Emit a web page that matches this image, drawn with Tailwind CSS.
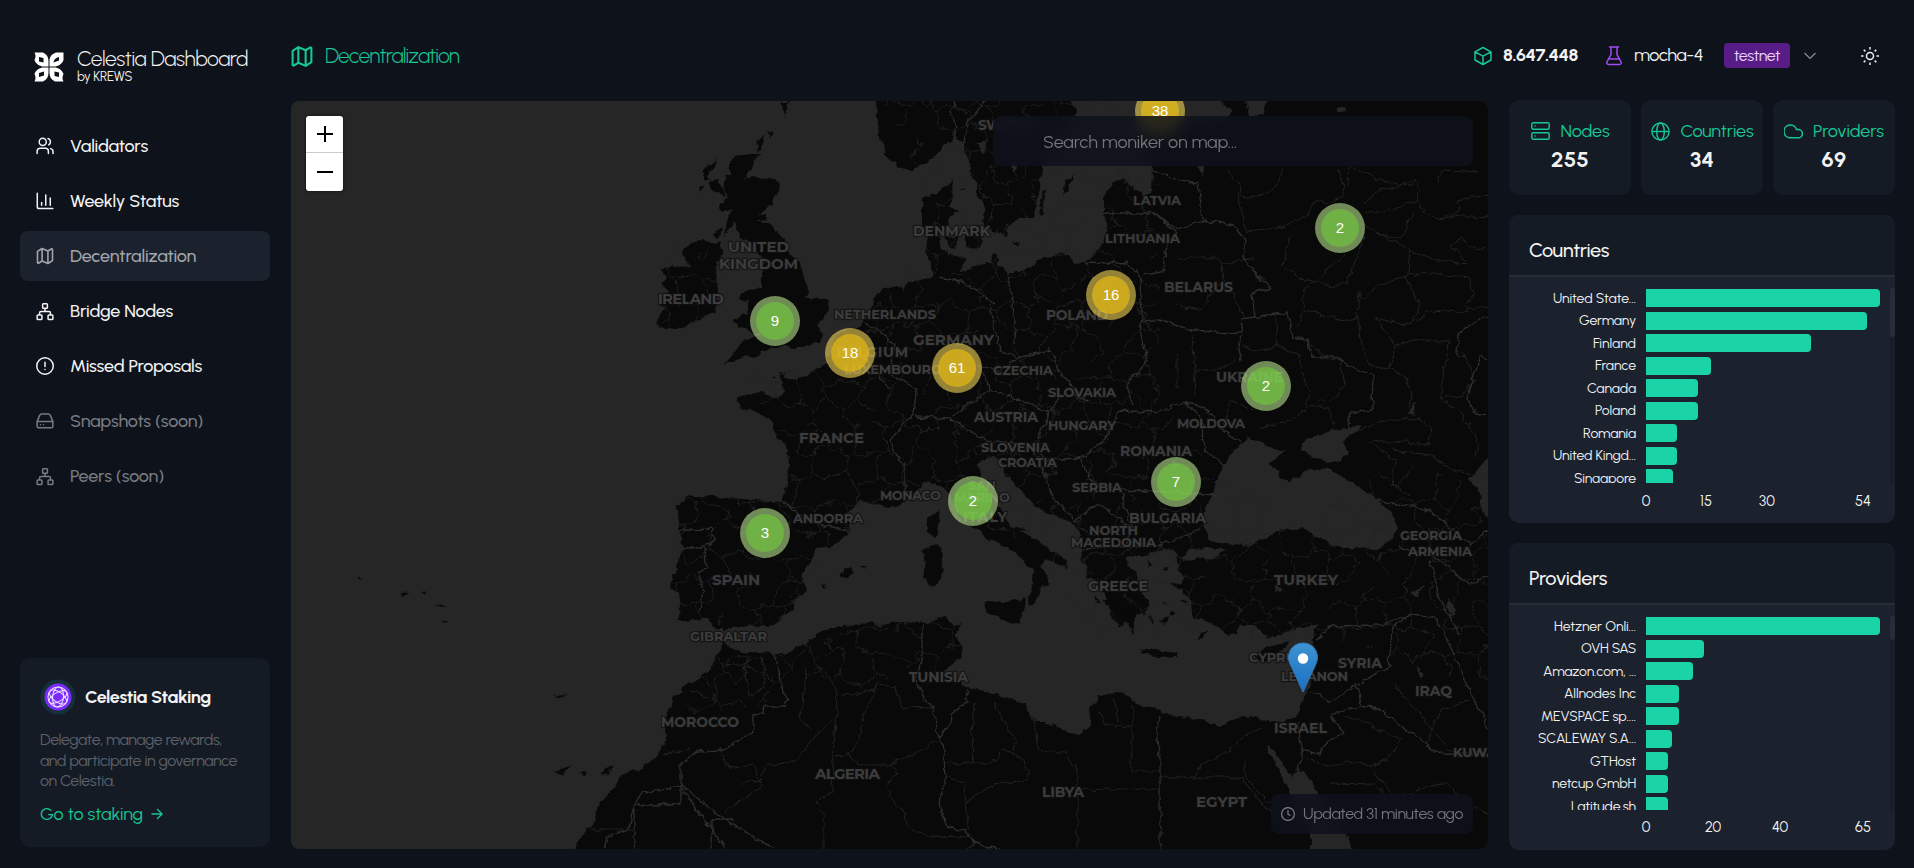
<!DOCTYPE html>
<html lang="en">
<head>
<meta charset="utf-8">
<title>Celestia Dashboard</title>
<script src="https://cdn.jsdelivr.net/npm/@tailwindcss/browser@4"></script>
</head>
<body class="h-[868px] w-[1914px] overflow-hidden bg-[#0e121b] font-[Urbanist,Lato,sans-serif] text-[#f2f2f2]">
<svg class="hidden">
  <defs>
    <symbol id="i-map" viewBox="0 0 24 24"><path d="M3 6.5 8.5 3 15.5 6 20 3.3a.8.8 0 0 1 1 .7V17.5L15.5 21 8.5 18 4 20.700a.8.8 0 0 1-1-.7ZM8.500 3v15M15.500 6v15"/></symbol>
    <symbol id="i-net" viewBox="0 0 24 24"><rect x="8.800" y="1.500" width="6.400" height="6" rx="1"/><rect x="1.500" y="16.500" width="6.400" height="6" rx="1"/><rect x="16.100" y="16.500" width="6.400" height="6" rx="1"/><path d="M12 7.500V12M4.700 16.500V14a2 2 0 0 1 2-2H17.300a2 2 0 0 1 2 2v2.500"/></symbol>
  </defs>
</svg>
<div class="flex h-full">
  <aside class="flex h-full w-[291px] shrink-0 flex-col pl-5 pr-[21px] pb-[21px]">
    <div class="flex h-[121px] items-start pl-[14px] pt-[47px]">
      <svg class="mt-[5px] h-[30px] w-[30px] shrink-0" viewBox="0 0 30 30" fill="#fff" fill-rule="evenodd">
        <path d="M.5.5H9C12.500 2 14.500 5 14.500 9V14.500H10C5.500 14.500 2 12 .5 8Q2.500 4 .5.5ZM5 5V9.500L9.500 10.500V6Z"/>
        <path d="M29.500.5H22C17.500 2 15.500 5 15.500 9V14.500H20C24.500 14.500 28 12 29.500 8ZM25 5V8.500L19.500 10.500Q20 6 25 5Z"/>
        <path d="M.5 29.500H9C12.500 28 14.500 25 14.500 21V15.500H10C5.500 15.500 2 18 .5 22Q2.500 26 .5 29.500ZM5 25V21L10 19.500V23.500Z"/>
        <path d="M29.500 29.500H21C17.500 28 15.500 25 15.500 21V15.500H20C24.500 15.500 28 18 29.500 22Q27.500 26 29.500 29.500ZM25 25V20.500L20.500 19.500V24Z"/>
      </svg>
      <div class="ml-[13px] flex flex-col">
        <span data-w="171" class="h-[23px] self-start whitespace-nowrap text-[21px] font-light leading-[23px]">Celestia Dashboard</span>
        <span data-w="55" class="self-start whitespace-nowrap text-[13px] leading-[14px]">by KREWS</span>
      </div>
    </div>
    <nav class="flex flex-col gap-[5px] text-[18px] font-medium">
      <a class="flex h-[50px] items-center gap-4 rounded-lg pl-4"><svg class="h-[18px] w-[18px]" viewBox="0 0 24 24" fill="none" stroke="currentColor" stroke-width="2" stroke-linecap="round"><circle cx="9" cy="6.500" r="4.700"/><path d="M1.500 22v-3a4 4 0 0 1 4-4h7a4 4 0 0 1 4 4v3M16 2a4.700 4.700 0 0 1 1 8.500M19.500 15.500a4 4 0 0 1 3.200 3.800V22"/></svg><span data-w="78">Validators</span></a>
      <a class="flex h-[50px] items-center gap-4 rounded-lg pl-4"><svg class="h-[18px] w-[18px]" viewBox="0 0 24 24" fill="none" stroke="currentColor" stroke-width="2" stroke-linecap="round"><path d="M1.700 1.500V19.500a2.500 2.500 0 0 0 2.500 2.500H22.500M7.500 14v3.500M13 4v13.500M19 8v9.500"/></svg><span data-w="109">Weekly Status</span></a>
      <a class="flex h-[50px] items-center gap-4 rounded-lg bg-[#1b222e] pl-4 text-[#a2a5ab]"><svg class="h-[20px] w-[18px]" fill="none" stroke="currentColor" stroke-width="1.900" stroke-linejoin="round"><use href="#i-map" width="20" height="20" x="-1"/></svg><span data-w="126">Decentralization</span></a>
      <a class="flex h-[50px] items-center gap-4 rounded-lg pl-4"><svg class="h-[19px] w-[18px]" fill="none" stroke="currentColor" stroke-width="2"><use href="#i-net"/></svg><span data-w="103">Bridge Nodes</span></a>
      <a class="flex h-[50px] items-center gap-4 rounded-lg pl-4"><svg class="h-[18px] w-[18px]" viewBox="0 0 24 24" fill="none" stroke="currentColor" stroke-width="2" stroke-linecap="round"><circle cx="12" cy="12" r="11"/><path d="M12 7v5.500M12 16.500v.2"/></svg><span data-w="132">Missed Proposals</span></a>
      <a class="flex h-[50px] items-center gap-4 rounded-lg pl-4 text-[#777b82]"><svg class="h-[18px] w-[18px]" viewBox="0 0 24 24" fill="none" stroke="currentColor" stroke-width="2" stroke-linecap="round" stroke-linejoin="round"><path d="M1.500 12.500 5 4.500Q5.500 2.500 7.500 2.500H16.500Q18.500 2.500 19 4.500L22.500 12.500V19a2 2 0 0 1-2 2H3.500a2 2 0 0 1-2-2ZM1.500 12.500H22.500M6 17h.1M10 17h.1"/></svg><span data-w="133">Snapshots (soon)</span></a>
      <a class="flex h-[50px] items-center gap-4 rounded-lg pl-4 text-[#777b82]"><svg class="h-[19px] w-[18px]" fill="none" stroke="currentColor" stroke-width="2"><use href="#i-net"/></svg><span data-w="94">Peers (soon)</span></a>
    </nav>
    <section class="mt-auto flex h-[189px] flex-col rounded-[10px] bg-[#151b25] px-5 pt-[21px]">
      <div class="flex h-9 items-center">
        <svg class="h-[36px] w-[36px] shrink-0" viewBox="0 0 36 36"><circle cx="18" cy="18" r="17.500" fill="#15303a"/><circle cx="18" cy="18" r="13.500" fill="#7b2bf9"/><g fill="none" stroke="#eadcff" stroke-width="1.100"><circle cx="18" cy="18" r="10"/><ellipse cx="18" cy="18" rx="10" ry="5" transform="rotate(35 18 18)"/><ellipse cx="18" cy="18" rx="10" ry="4.500" transform="rotate(-30 18 18)"/><ellipse cx="18" cy="18" rx="10" ry="5.500" transform="rotate(95 18 18)"/></g></svg>
        <span data-w="126" class="ml-[9px] text-[18px] font-bold">Celestia Staking</span>
      </div>
      <p class="mt-[15px] text-[16px] leading-[20.500px] text-[#5c6169]"><span data-w="182">Delegate, manage rewards,</span><br><span data-w="197">and participate in governance</span><br><span data-w="75">on Celestia.</span></p>
      <div class="mt-[9px] flex items-center gap-2 text-[18px] text-[#17c795]"><span data-w="103">Go to staking</span><svg class="h-3 w-3" viewBox="0 0 12 12" fill="none" stroke="currentColor" stroke-width="1.400" stroke-linecap="round"><path d="M1 6H11M6.500 1.500 11 6 6.500 10.500"/></svg></div>
    </section>
  </aside>

  <div class="flex min-w-0 grow flex-col">
    <header class="flex h-[100px] shrink-0 items-center pt-[11px]">
      <svg class="h-[24px] w-[23px] text-[#17c795]" fill="none" stroke="currentColor" stroke-width="2" stroke-linejoin="round"><use href="#i-map" width="25" height="25" x="-1.500"/></svg>
      <span data-w="134" class="ml-[11px] text-[21px] font-light text-[#17c795]">Decentralization</span>
      <div class="ml-auto flex items-center">
        <svg class="h-5 w-[18px] text-[#17c795]" viewBox="0 0 18 20" fill="none" stroke="currentColor" stroke-width="1.500" stroke-linejoin="round"><path d="M9 1.500 17 5.800V14L9 18.500 1 14V5.800ZM1 5.800 9 10.200 17 5.800M9 10.200V18.500"/></svg>
        <span data-w="75" class="ml-[11px] text-[18px] font-bold">8.647.448</span>
        <svg class="ml-[28px] h-5 w-4 text-[#a34bf2]" viewBox="0 0 16 20" fill="none" stroke="currentColor" stroke-width="1.500" stroke-linecap="round"><path d="M3.500 1H12.500M5 1V8.500L.9 16Q.5 18.500 3 18.500H13Q15.500 18.500 15.100 16L11 8.500V1M3 13H13"/></svg>
        <span data-w="69" class="ml-3 text-[18px]">mocha-4</span>
        <span class="ml-[21px] flex h-[25px] w-[66px] items-center justify-center rounded bg-[#581c87] text-[16px] text-[#e9d5ff]"><span data-w="46">testnet</span></span>
        <svg class="ml-[14px] h-[8px] w-[12px]" viewBox="0 0 12 8" fill="none" stroke="#8b8f96" stroke-width="1.200"><path d="M.5 1 6 6.500 11.500 1"/></svg>
        <svg class="ml-[45px] mr-[35px] h-[18px] w-[18px]" viewBox="0 0 18 18" fill="none" stroke="#eee" stroke-width="1.500"><circle cx="9" cy="9" r="3.500"/><path d="M9 0V2.500M9 15.500V18M0 9H2.500M15.500 9H18M2.700 2.700 4.400 4.400M13.600 13.600 15.300 15.300M2.700 15.300 4.400 13.600M13.600 4.400 15.300 2.700"/></svg>
      </div>
    </header>
    <div class="flex grow">
      <main class="relative mt-px h-[748px] w-[1197px] shrink-0 overflow-hidden rounded-lg bg-[#262626]">
        <svg class="block h-[748px] w-[1197px]" viewBox="291 101 1197 748">
          <defs>
            <filter id="rough" color-interpolation-filters="sRGB" filterUnits="userSpaceOnUse" x="280" y="90" width="1220" height="770"><feTurbulence type="fractalNoise" baseFrequency=".11" numOctaves="3" seed="4"/><feDisplacementMap in="SourceGraphic" scale="7" xChannelSelector="R" yChannelSelector="G"/></filter>
            <filter id="wiggle" color-interpolation-filters="sRGB" filterUnits="userSpaceOnUse" x="280" y="90" width="1220" height="770"><feTurbulence type="fractalNoise" baseFrequency=".07" numOctaves="3" seed="9"/><feDisplacementMap in="SourceGraphic" scale="15" xChannelSelector="R" yChannelSelector="G"/></filter>
            <clipPath id="web-area"><path d="M657 241H722V330H657ZM737 369 813 369 873 300 905 280 922 180 880 101H1160V400L1215 470 1300 520 1400 460 1488 490V690L1340 640 1200 640 1100 640 1020 540 973 528 945 487 885 502 851 530 807 590 775 625H672V496H782L787 445Z"/><path d="M730 655 780 655 870 622 962 616V680L905 668 870 690 790 670 765 705 700 715 670 715 712 650Z"/></clipPath>
          </defs>
          <g filter="url(#rough)" fill="#090909">
            <path d="M734 156 761 153 750 168 744 178 773 179 779 183 775 197 767 209 757 215 766 214 765 220 755 222 768 222 777 230 783 239 785 250 800 263 805 280 809 292 805 298 813 297 827 299 829 308 823 320 817 325 824 335 820 342 805 347 787 347 773 347 760 352 755 358 747 355 733 363 724 363 737 350 745 339 763 336 755 333 740 327 731 323 740 317 747 312 747 302 740 298 743 292 755 289 762 288 762 273 765 262 757 253 753 243 745 240 737 230 735 220 728 233 724 238 727 220 732 208 722 213 720 207 727 197 723 190 725 177 732 173 730 165Z"/>
            <path d="M690 244 703 241 720 243 723 253 717 262 716 272 718 290 716 313 703 317 690 323 677 330 658 328 657 320 665 308 660 300 670 293 661 285 667 277 660 270 673 266 690 265 682 255Z"/>
            <path d="M877 95 877 101 878 123 879 138 883 143 885 153 893 163 903 169 913 169 927 163 937 155 942 145 952 142 955 127 957 137 964 145 966 157 973 177 977 193 987 208 983 218 985 228 997 233 1007 237 1030 267 1008 275 1002 267 987 262 973 268 961 272 965 260 942 250 940 237 947 227 950 218 958 210 950 208 953 180 942 187 937 195 923 198 922 207 922 223 928 237 925 250 930 263 933 277 920 280 907 282 905 290 897 286 883 288 873 300 870 313 860 327 837 335 830 347 828 363 813 369 807 377 797 379 785 378 786 373 779 372 782 383 783 395 772 397 762 392 750 394 737 398 740 408 755 412 768 418 773 427 777 437 787 445 789 460 787 487 782 502 757 500 727 498 697 496 688 497 675 508 680 527 682 547 678 567 672 578 671 588 678 593 680 610 677 621 688 621 707 618 715 627 722 631 722 643 715 660 707 673 688 685 673 698 668 713 664 730 667 735 663 747 655 757 638 770 622 774 613 790 599 803 593 825 580 838 570 860 1500 860 1500 90Z"/>
            <g fill="#262626">
              <path d="M985 228 997 233 1007 237 1008 227 1018 218 1033 218 1037 204 1040 190 1042 167 1050 150 1062 135 1068 120 1076 113 1068 95 1215 95 1232 112 1224 122 1190 124 1150 125 1148 150 1153 166 1152 193 1143 197 1133 187 1123 178 1111 183 1105 197 1105 213 1107 233 1099 250 1086 262 1074 263 1068 253 1046 256 1030 267 1008 275 1002 267 987 262 973 268 961 272 965 260 975 245Z"/>
              <path d="M722 631 732 627 760 626 775 625 782 617 793 610 795 600 807 589 801 577 813 557 817 550 840 542 851 530 848 515 860 500 872 502 888 507 900 505 913 493 927 482 943 487 952 497 960 517 973 528 990 540 1007 547 1023 560 1032 572 1033 583 1028 598 1030 604 1035 602 1040 590 1049 585 1047 575 1042 568 1045 558 1067 568 1065 560 1040 543 1020 530 1033 532 1010 525 997 503 982 483 979 463 993 455 1003 463 1005 473 1020 490 1040 510 1058 517 1073 522 1080 537 1082 560 1090 577 1107 597 1112 617 1120 627 1127 623 1133 635 1135 617 1147 613 1148 600 1137 583 1138 573 1127 565 1128 557 1147 555 1163 548 1177 553 1177 563 1180 573 1185 578 1180 587 1190 600 1193 617 1207 622 1220 628 1227 635 1238 633 1241 625 1253 625 1268 637 1287 633 1297 627 1310 627 1318 623 1313 640 1317 650 1313 677 1303 700 1297 717 1280 722 1260 719 1250 715 1233 720 1220 727 1200 720 1180 716 1163 715 1160 708 1135 705 1132 697 1117 692 1100 696 1089 708 1091 725 1077 736 1053 725 1033 718 1023 703 993 693 967 687 943 673 960 657 962 647 955 637 962 622 953 625 947 616 927 623 897 622 880 627 870 623 843 626 820 632 807 642 787 652 773 655 760 652 740 653 730 647 722 641Z"/>
              <path d="M1227 460 1228 457 1246 438 1258 440 1269 447 1287 450 1268 462 1282 478 1290 482 1310 468 1330 470 1353 483 1377 500 1392 512 1398 528 1393 540 1380 548 1353 549 1333 545 1317 537 1303 528 1280 530 1260 540 1250 546 1227 543 1210 540 1203 528 1203 510 1213 495 1217 477Z"/>
              <path d="M1301 448 1309 438 1335 430 1362 425 1352 435 1343 443 1349 450 1341 460 1327 463 1313 458ZM1182 560 1190 550 1207 547 1227 552 1210 558ZM1495 450 1478 470 1469 480 1480 493 1482 510 1495 525ZM1244 95 1248 116 1262 115 1271 95ZM1338 108 1345 106 1346 112 1337 113ZM1410 592 1425 586 1418 597ZM1448 598 1456 610 1453 618 1447 608ZM977 143 988 138 985 155ZM1012 165 1018 158 1015 178ZM1416 665 1423 675 1421 679ZM1276 583 1283 590 1277 593ZM1407 416 1417 401 1414 416ZM1196 166 1204 166 1203 174Z"/>
              <path d="M1265 745 1273 750 1293 777 1297 772 1302 747 1304 748 1299 772 1305 772 1313 783 1322 803 1340 823 1355 855H1310L1310 833 1297 810 1287 787 1280 772Z"/>
            </g>
            <path d="M983 603 990 601 1003 603 1026 598 1022 613 1020 626 1007 621 987 612ZM923 550 937 544 943 557 942 580 930 586 924 577 926 563ZM927 518 938 510 940 523 936 539 928 532ZM1140 648 1153 650 1178 653 1177 657 1157 657 1141 652ZM839 574 850 568 854 572 847 579ZM822 586 827 584 825 588ZM859 567 865 567 866 570ZM1066 182 1074 174 1068 192 1063 194ZM1039 215 1044 190 1046 190 1042 216ZM944 236 957 238 956 250 949 248ZM966 230 980 226 981 248 966 247ZM959 189 964 187 963 190ZM1012 241 1020 243 1018 247ZM992 256 998 254 998 267 991 267ZM782 101 790 101 786 118ZM703 170 717 157 713 170 707 175 710 180 703 178ZM709 182 718 179 725 197 716 194ZM699 185 703 185 700 195ZM757 142 765 134 760 148 756 151ZM713 233 722 227 718 240ZM767 132 774 134 770 137ZM1198 638 1206 630 1204 640ZM1254 656 1267 647 1290 642 1277 655 1264 662ZM1102 602 1130 596 1148 609 1132 613 1125 618 1112 608ZM600 774 612 764 610 772 604 776ZM554 771 570 766 572 766 562 775ZM580 772 587 773 583 778ZM553 695 566 694 560 697ZM400 592 408 593 404 596ZM420 592 428 593 424 595ZM436 604 446 605 441 608ZM355 577 362 578 358 580ZM441 622 448 621 445 624ZM1146 558 1153 566 1148 565ZM1163 568 1170 567 1167 571ZM1172 583 1184 585 1178 590ZM1180 600 1187 603 1181 605ZM1150 615 1155 621 1152 623ZM1160 620 1168 617 1165 626ZM1170 610 1177 613 1170 616ZM1163 602 1168 604 1165 607ZM1086 570 1091 578 1087 579ZM1094 594 1101 603 1096 603ZM772 376 774 378 772 378ZM776 381 777 383 775 383Z"/>
          </g>
          <g clip-path="url(#web-area)"><path id="web" fill="none" stroke="#252525" stroke-width=".8" filter="url(#wiggle)"/></g>
          <g filter="url(#rough)" fill="none" stroke="#262626" stroke-width=".9" stroke-linejoin="round">
            <path d="M740 784 760 780 765 767 797 760 810 742 838 713M720 749 729 769 752 764 762 786 725 812M806 667 804 703 799 717 810 729M824 671 836 685 837 712 833 756 832 793 816 802 823 814V849M837 696 875 690 863 717 858 743 848 755 833 756M875 690 877 684 895 686 903 707 933 708M848 755 859 765 890 765 938 741M890 765 898 774 887 784 893 802 903 810 907 827 927 836 970 837M946 763 992 763 1003 749 1020 758 1030 771 1027 780 993 785 966 802M970 837 966 802 963 782 947 777M974 703 972 736 973 763M994 703 1010 733 1016 742 1013 757M1033 718 1039 750 1066 752 1071 764 1077 769 1077 849M1077 790 1159 788M1132 705V771H1159M1160 778H1241L1267 810 1275 812M1194 778 1200 765 1225 754 1240 739 1260 727M1245 760 1245 778 1270 803M1115 698 1118 722M1100 710 1103 724 1130 727M1345 716 1370 725 1400 739 1387 760 1375 765 1345 762 1330 768 1307 758M1370 765 1403 810M1428 740 1440 710 1470 700M1393 683 1450 750 1488 754M1330 783 1375 784 1390 800 1442 782 1488 815M592 829 633 829M690 747 681 751 663 755M722 665 744 664 762 656M744 664 750 695M710 697 690 690M750 697 765 687 762 656"/>
            <path d="M1227 168 1242 190 1240 198 1265 195 1280 182 1283 166M1240 198 1243 220 1247 232 1275 229 1290 224 1307 215 1317 200 1327 204 1340 198 1345 186 1337 168M1350 168 1347 186M1351 166 1375 178 1400 186 1415 180 1420 190 1417 200 1420 208 1437 219 1462 216 1488 218M1365 204 1380 190 1413 184M1417 200 1385 213 1365 211M1437 219 1460 212 1457 200 1488 195M1437 184 1443 170 1480 172M1413 212 1400 240 1375 232 1363 224M1365 235 1356 258 1348 282 1332 286 1317 282 1328 268 1345 255M1375 232 1410 250 1408 275 1380 285 1360 300M1410 252 1450 262 1468 264 1450 245 1462 238 1475 250 1488 245M1408 275 1430 273 1448 275 1470 278 1473 295 1465 308M1405 277 1420 305 1410 325 1375 318M1410 325 1430 310 1460 312 1488 305M1317 282 1305 288 1303 310 1320 315 1345 320 1358 318 1360 290M1283 265 1300 278 1317 282M1283 265 1290 235M1222 265 1253 257M1178 258 1222 258 1222 280 1200 310 1175 305M1222 265 1222 275 1245 318M1358 318 1362 345 1370 365 1390 368 1395 345 1375 318M1395 345 1420 340 1450 340 1445 365 1440 398 1463 395 1475 380 1462 350M1390 368 1407 378 1412 395 1410 412M1303 312 1297 328M1340 360 1322 355 1298 335M1275 312 1278 345 1260 352 1243 345M1278 345 1300 355 1302 378M1320 358 1340 360 1345 385 1330 402 1318 400M1192 335 1195 370 1220 370 1235 360M1178 355V390M1195 370 1194 394M1302 378 1310 390 1305 410 1288 422 1262 428M1310 405 1328 408 1335 425M1357 430 1378 422 1420 418 1432 428 1430 445 1370 440M1372 443 1395 460 1392 485 1410 495M1392 450 1430 455 1453 470 1488 478M1440 398 1458 410 1478 440 1475 455M1225 425 1230 400 1255 410"/>
          </g>
          <g filter="url(#rough)" fill="none" stroke="#2f2f2f" stroke-width="1.300" stroke-linejoin="round">
            <path d="M774 655 780 675 783 692 789 701 785 706H764L763 713 752 715 755 730 735 743 724 751 697 752 681 763V787L725 849M681 785 725 820 775 849M681 787V805H634V849M681 787 643 792 634 805 628 828 607 837 604 849M711 849 711 820 735 820"/>
            <path d="M922 624 922 660 915 680 925 700 933 707 939 738 944 750 945 785 938 802 948 827 966 832 975 844 1000 849M939 738 950 725 951 715 968 702 967 689M975 844 967 849M1160 715 1157 740 1160 756V849M1297 720 1302 750M1302 750 1317 754 1328 742 1345 733 1330 716 1360 706 1380 709 1400 725 1440 754 1488 755M1310 692 1330 702 1389 665 1392 630 1408 615 1380 625 1330 626 1317 640M1408 615 1435 617 1450 645 1460 670 1488 728M1356 683 1362 706"/>
            <path d="M680 530 690 530 711 529 715 538 705 547 682 547M705 547 706 570 698 573 704 590 699 613M782 502 800 515 820 525 850 530M830 340 850 358 865 360 890 388M865 325 880 330 895 345 890 375 917 388 913 415 890 440 905 470 905 490 913 495M990 305 1000 350 1018 358 1050 350 1060 372 1085 400M1008 275 1015 320 1014 345M938 277 965 282 995 305M1018 358 1000 372 980 365 990 390 1008 396 1050 412 1060 395 1090 400M990 390 950 418 915 417M950 418 985 440 1030 445M1048 412 1045 425 1033 445 1046 460 1080 458 1105 440 1120 410 1155 412 1185 403 1203 420 1204 450 1227 466M1080 458 1090 480 1120 490 1170 492 1216 495M1030 445 1045 475 1050 495 1075 520M1120 490 1132 530 1125 547 1160 545 1200 530M1075 520 1095 505 1110 510 1132 530M1082 550 1100 545 1125 547M1126 262 1130 265 1139 275 1144 320 1140 325 1147 360 1127 385 1132 405M1086 262 1126 264M1105 213 1155 213 1177 233 1165 250 1163 272 1142 275M1153 171 1180 180 1198 183 1203 220 1233 225 1245 240 1243 257 1257 275 1270 288 1252 293 1255 317 1242 319 1240 332 1213 333 1193 330 1160 321 1144 323M1255 317 1287 312 1293 337 1307 340 1312 357 1337 357 1350 367 1373 375 1372 410 1350 413 1348 428M1240 332 1238 350 1241 362M1155 213 1178 230 1203 220M1185 403 1205 408 1222 430 1240 442M1377 500 1430 510 1470 545 1488 530M1398 545 1440 560 1470 585 1488 575M1430 560 1440 600 1460 635M1488 315 1458 333 1457 355 1464 358M1488 360 1480 356 1467 400 1475 412 1488 414M963 145 970 120 985 101M957 127 950 112 955 101"/>
          </g>
          <g id="labels" font-family="Montserrat,'Open Sans',sans-serif" font-weight="700" fill="#3c3c3c" stroke="#101010" stroke-width="2.500" stroke-opacity=".75" paint-order="stroke" stroke-linejoin="round"></g>
        </svg>
        <div id="clusters" class="contents font-['Liberation_Sans',sans-serif] text-[15px]"></div>
        <svg class="absolute left-[996px] top-[541px] h-[51px] w-[32px]" viewBox="0 0 32 51"><defs><linearGradient id="pin" x2="0" y2="1"><stop stop-color="#3e93d0"/><stop offset="1" stop-color="#1b6fc4"/></linearGradient></defs><path d="M16 1C7 1 1.500 8 1.500 15.500 1.500 19 3 22 4.500 25L16 50 27.500 25C29 22 30.500 19 30.500 15.500 30.500 8 25 1 16 1Z" fill="url(#pin)" stroke="#2e78b4" stroke-width="1"/><circle cx="16" cy="16.500" r="5.200" fill="#fff"/></svg>
        <div class="absolute left-[15px] top-[15px] flex w-[37px] flex-col rounded-[3px] bg-white shadow-[0_0_3px_rgba(0,0,0,.65)]">
          <div class="flex h-[37px] items-center justify-center border-b border-[#ccc]"><svg class="h-4 w-4" viewBox="0 0 16 16" stroke="#000" stroke-width="2"><path d="M0 8H16M8 0V16"/></svg></div>
          <div class="flex h-[38px] items-center justify-center"><svg class="h-4 w-4" viewBox="0 0 16 16" stroke="#000" stroke-width="2"><path d="M0 8H16"/></svg></div>
        </div>
        <div class="absolute left-[702px] top-[15px] flex h-[50px] w-[480px] items-center rounded-lg bg-[#0e121b]/85 pl-[50px] pt-[2px] text-[18px] text-[#72757b] backdrop-blur-[8px]"><span data-w="194">Search moniker on map...</span></div>
        <div class="absolute left-[980px] top-[693px] flex h-[40px] w-[202px] items-center rounded-lg bg-[#0e121b]/85 pl-[10px] text-[16px] text-[#72757b] backdrop-blur-[8px]"><svg class="mr-2 h-[14px] w-[14px] shrink-0" viewBox="0 0 14 14" fill="none" stroke="#85888e" stroke-width="1.100"><circle cx="7" cy="7" r="6.400"/><path d="M7 3V7.500L9.500 8.500"/></svg><span data-w="160">Updated 31 minutes ago</span></div>
      </main>
      <aside class="ml-[21px] flex w-[386px] flex-col">
        <div class="grid grid-cols-3 gap-[10px]">
          <div class="flex h-[95px] flex-col items-center rounded-[10px] bg-[#151b25] pt-[19px]"><div class="flex h-6 items-center gap-[11px] text-[18px] text-[#17c795]"><svg class="h-[18px] w-[19px] shrink-0" viewBox="0 0 19 18" fill="none" stroke="currentColor" stroke-width="1.400" stroke-linecap="round"><rect x=".8" y=".7" width="17.400" height="6.600" rx="1.500"/><rect x=".8" y="10.700" width="17.400" height="6.600" rx="1.500"/><path d="M4 4h.1M4 14h.1"/></svg><span data-w="49">Nodes</span></div><b data-w="38" class="mt-[4px] text-[22px] leading-[26px]">255</b></div>
          <div class="flex h-[95px] flex-col items-center rounded-[10px] bg-[#151b25] pt-[19px]"><div class="flex h-6 items-center gap-[11px] text-[18px] text-[#17c795]"><svg class="h-[19px] w-[19px] shrink-0" viewBox="0 0 20 20" fill="none" stroke="currentColor" stroke-width="1.500"><circle cx="10" cy="10" r="9"/><ellipse cx="10" cy="10" rx="4" ry="9"/><path d="M1 10H19"/></svg><span data-w="73">Countries</span></div><b data-w="24" class="mt-[4px] text-[22px] leading-[26px]">34</b></div>
          <div class="flex h-[95px] flex-col items-center rounded-[10px] bg-[#151b25] pt-[19px]"><div class="flex h-6 items-center gap-[10px] text-[18px] text-[#17c795]"><svg class="h-[15px] w-[19px] shrink-0" viewBox="0 0 19 15" fill="none" stroke="currentColor" stroke-width="1.500"><path d="M6 13.800A6.400 6.400 0 1 1 12.500 5.600H14.300A4.100 4.100 0 0 1 14.300 13.800Z"/></svg><span data-w="71">Providers</span></div><b data-w="25" class="mt-[4px] text-[22px] leading-[26px]">69</b></div>
        </div>
        <section class="mt-5 flex h-[308px] flex-col overflow-hidden rounded-[10px] bg-[#1b212d]">
          <h2 class="flex h-[62px] shrink-0 items-center border-b-2 border-[#252c38] bg-[#151b25] pl-5 pt-[9px] text-[20px] font-medium"><span data-w="80">Countries</span></h2>
          <div class="mt-[10px] flex h-[196px] justify-between overflow-hidden"><div id="countries" class="flex flex-col pt-[2px] text-[14px]"></div><div class="w-[5px] bg-[#181e29]"><div class="h-[50px] rounded-full bg-[#262d39]"></div></div></div>
          <div class="ml-[137px] flex h-[37px] items-center text-[14.500px]"><span class="-ml-[20px] w-10 text-center">0</span><span class="ml-[20px] w-10 text-center">15</span><span class="ml-[21px] w-10 text-center">30</span><span class="ml-[56px] w-10 text-center">54</span></div>
        </section>
        <section class="mt-5 flex h-[307px] flex-col overflow-hidden rounded-[10px] bg-[#1b212d]">
          <h2 class="flex h-[62px] shrink-0 items-center border-b-2 border-[#252c38] bg-[#151b25] pl-5 pt-[9px] text-[20px] font-medium"><span data-w="78">Providers</span></h2>
          <div class="mt-[10px] flex h-[195px] justify-between overflow-hidden"><div id="providers" class="flex flex-col pt-[2px] text-[14px]"></div><div class="w-[5px] bg-[#181e29]"><div class="h-[25px] rounded-full bg-[#262d39]"></div></div></div>
          <div class="ml-[137px] flex h-[36px] items-center text-[14.500px]"><span class="-ml-[20px] w-10 text-center">0</span><span class="ml-[27px] w-10 text-center">20</span><span class="ml-[27px] w-10 text-center">40</span><span class="ml-[43px] w-10 text-center">65</span></div>
        </section>
      </aside>
    </div>
  </div>
</div>
<script>
// Bar charts: label, label width, bar width
const charts = {
  countries: [['United State...',83,234],['Germany',57,221],['Finland',43,165],['France',41,65],['Canada',49,52],['Poland',41,52],['Romania',53,31],['United Kingd...',83,31],['Singapore',62,27]],
  providers: [['Hetzner Onli...',82,234],['OVH SAS',55,58],['Amazon.com, ...',93,47],['Allnodes Inc',72,33],['MEVSPACE sp....',95,33],['SCALEWAY S.A...',98,26],['GTHost',46,22],['netcup GmbH',84,22],['Latitude.sh',65,22]]
};
for (const id in charts) document.getElementById(id).innerHTML = charts[id].map(([t, w, b]) =>
  `<div class="flex h-[22.500px] shrink-0 items-start"><div class="flex h-[18px] w-[137px] items-center justify-end pr-[10px] whitespace-nowrap"><span data-w="${w}">${t}</span></div><div class="h-[18px] rounded-r bg-[#1ad3a7]" style="width:${b}px"></div></div>`).join('');

// Marker clusters: x, y, count
document.getElementById('clusters').innerHTML = [[484,220,9],[559,252,18],[666,267,61],[869,10,38],[820,194,16],[1049,127,2],[975,285,2],[885,381,7],[682,400,2],[474,432,3]].map(([x, y, n]) => {
  const [outer, inner] = n > 10 ? ['bg-[rgba(241,211,87,.6)]', 'bg-[rgba(240,194,12,.6)]'] : ['bg-[rgba(181,226,140,.6)]', 'bg-[rgba(110,204,57,.6)]'];
  return `<div class="absolute flex h-[50px] w-[50px] -translate-x-1/2 -translate-y-1/2 items-center justify-center rounded-full ${outer}" style="left:${x}px;top:${y}px"><div class="flex h-[38px] w-[38px] items-center justify-center rounded-full text-white ${inner}">${n}</div></div>`;
}).join('');

// Country names: text, left, centre line, width, size
document.getElementById('labels').innerHTML = [
['SWEDEN',978,125,62,14],['UNITED',728,247,61,15],['KINGDOM',719,264,79,15],['IRELAND',658,299,66,15],['DENMARK',913,231,77,14],['NETHERLANDS',834,315,102,13],['BELGIUM',836,352,72,14],['LUXEMBOURG',844,370,97,13],['GERMANY',913,340,81,15],['CZECHIA',993,371,60,13],['LATVIA',1133,201,48,13],['LITHUANIA',1105,239,75,13],['BELARUS',1164,287,69,14],['POLAND',1046,315,62,14],['UKRAINE',1216,377,67,14],['SLOVAKIA',1048,393,68,13],['AUSTRIA',974,417,64,14],['HUNGARY',1048,426,68,13],['MOLDOVA',1177,424,68,13],['SLOVENIA',981,448,69,13],['CROATIA',998,463,59,13],['ROMANIA',1120,451,72,14],['SERBIA',1072,488,50,13],['BULGARIA',1129,518,77,14],['NORTH',1089,531,49,13],['MACEDONIA',1071,543,85,13],['GREECE',1088,586,60,14],['TURKEY',1274,580,64,15],['GEORGIA',1400,536,62,13],['ARMENIA',1408,552,64,13],['CYPRUS',1249,658,55,13],['LEBANON',1281,677,67,13],['SYRIA',1338,663,44,14],['IRAQ',1415,691,37,14],['ISRAEL',1274,728,53,14],['KUWAIT',1453,753,55,13],['EGYPT',1196,802,51,15],['LIBYA',1042,792,42,14],['ALGERIA',815,774,65,15],['MOROCCO',661,722,78,14],['TUNISIA',909,677,59,14],['GIBRALTAR',690,637,77,13],['SPAIN',712,580,48,15],['ANDORRA',793,519,70,13],['MONACO',880,496,61,13],['SAN',968,486,28,13],['MARINO',954,498,56,13],['ITALY',963,517,44,14],['FRANCE',799,438,65,15]
].map(([t, x, y, w, s]) => `<text x="${x}" y="${y - .5 + s * .36}" font-size="${s}" textLength="${w}">${t}</text>`).join('');

// Province borders: jittered honeycomb
let seed = 11;
const rnd = () => (seed = (seed * 16807) % 2147483647) / 2147483647;
const pts = {}, pt = (i, j) => pts[i + ',' + j] ??= [650 + i * 15 + (rnd() - .5) * 13, 100 + j * 25 + ((i + j) % 2 ? 8 : 0) + (rnd() - .5) * 13];
let d = '';
for (let j = 0; j < 26; j++) for (let i = 0; i < 57; i++) {
  const [a, b] = pt(i, j), [c, e] = pt(i + 1, j);
  if (rnd() > .18) d += `M${a} ${b}L${c} ${e}`;
  if ((i + j) % 2) { const [f, g] = pt(i, j + 1); if (rnd() > .15) d += `M${a} ${b}L${f} ${g}`; }
}
document.getElementById('web').setAttribute('d', d);

// Letter spacing that gives each label its set width
const fit = () => document.querySelectorAll('[data-w]').forEach(el => {
  el.style.whiteSpace = 'nowrap';
  el.style.flexShrink = 0;
  el.style.letterSpacing = '0px';
  const gap = (el.dataset.w - el.getBoundingClientRect().width) / el.textContent.length;
  el.style.letterSpacing = gap + 'px';
});
addEventListener('load', () => { fit(); document.fonts.ready.then(fit); requestAnimationFrame(fit); });
</script>
</body>
</html>
